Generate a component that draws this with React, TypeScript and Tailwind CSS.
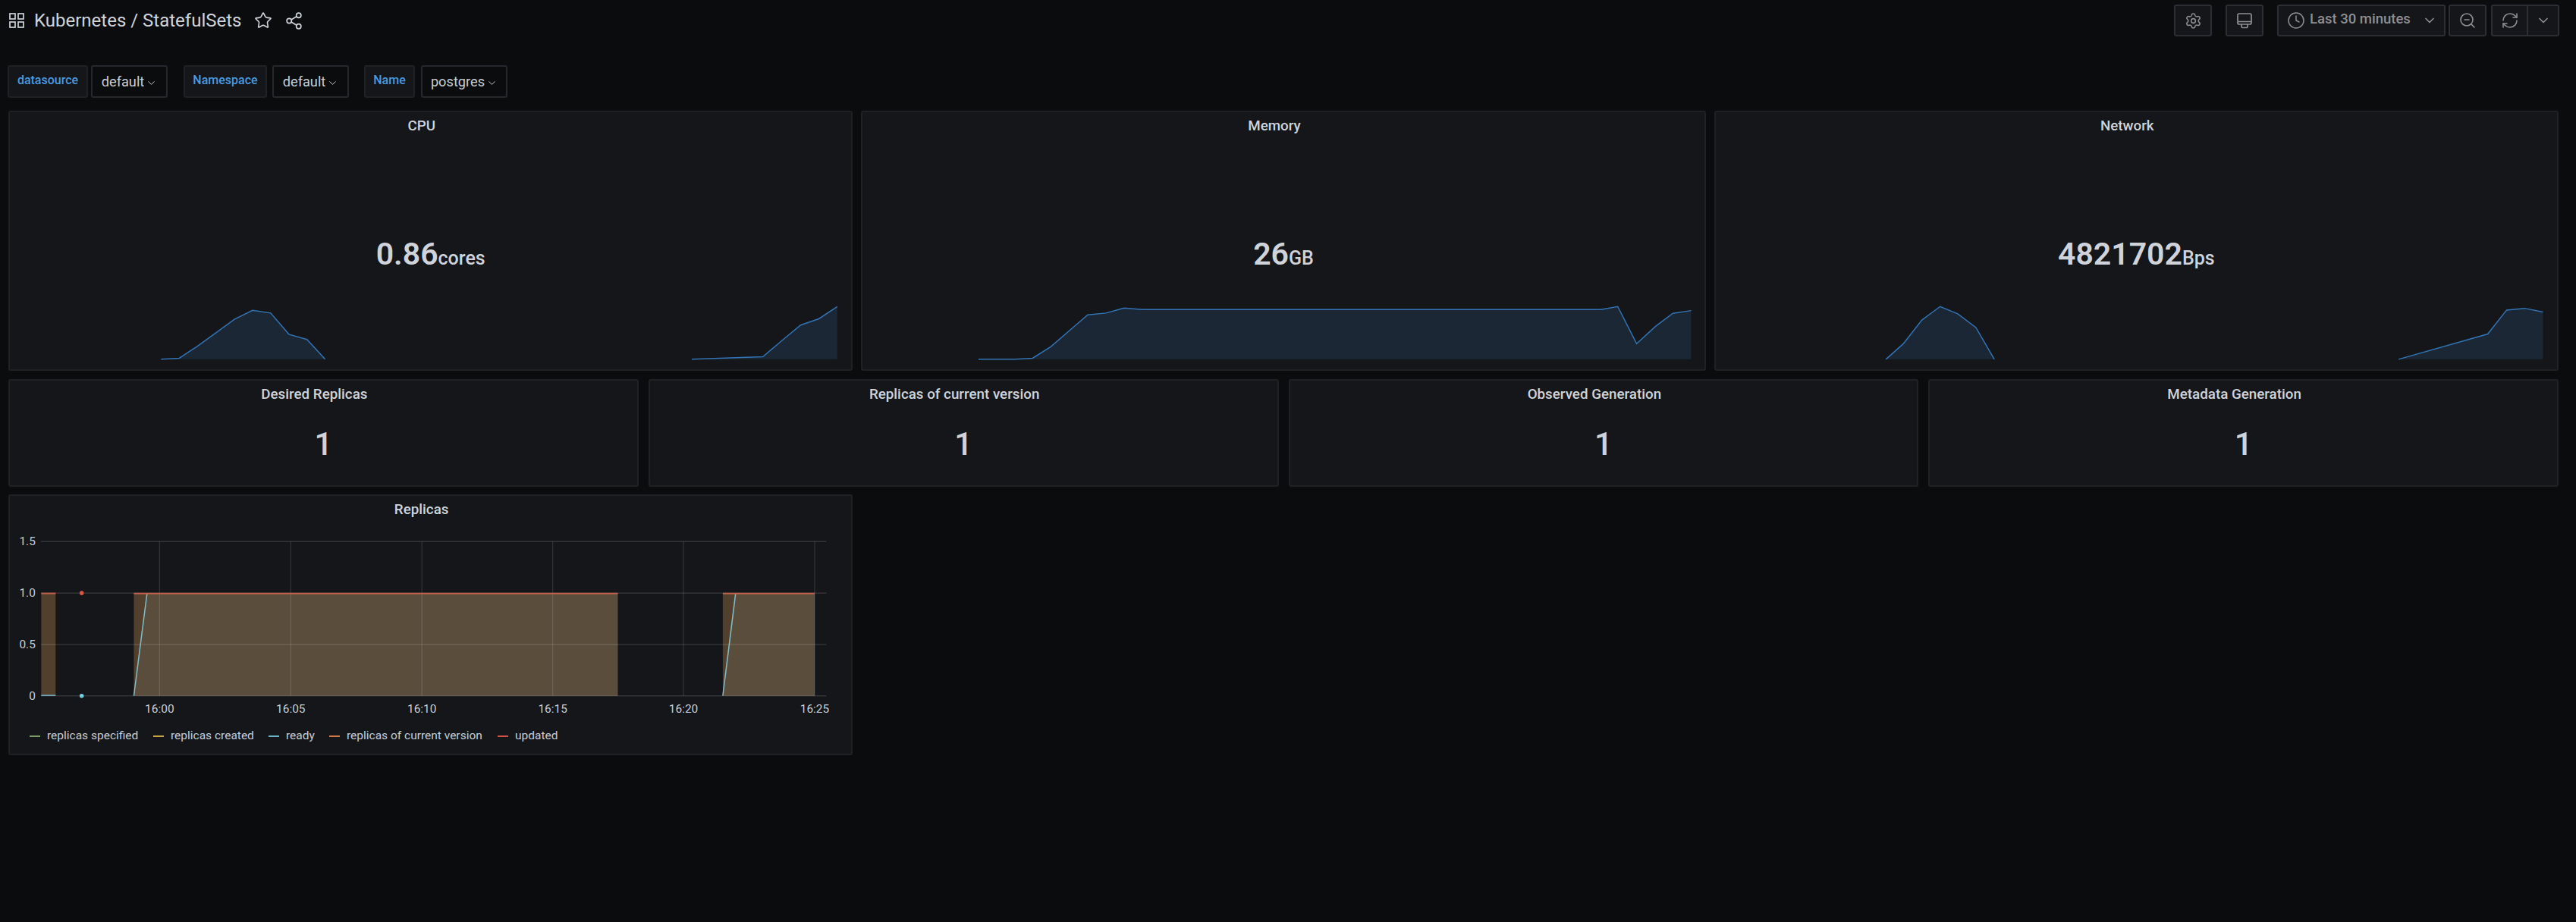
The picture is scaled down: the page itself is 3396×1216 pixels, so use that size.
import { ChevronDown, Clock, Settings, Share2, Star, ZoomOut, RefreshCw } from "lucide-react";

type Pt = [number, number];

const BASE = 329.7;

const sparks: Record<string, Pt[][]> = {
  CPU: [
    [[200, 329.7], [224, 328.3], [247, 313], [273, 294], [297, 276.3], [321, 264.3], [345, 268], [369, 296.3], [393, 303.3], [417, 329.7]],
    [[902, 329.7], [996, 326.3], [1022, 304], [1046, 284], [1070, 275.7], [1094.5, 259.3]],
  ],
  Memory: [
    [[153.5, 329.7], [202, 329.7], [225, 328.3], [249, 313], [273.5, 291.7], [298, 270.3], [322, 268], [346, 261.3], [370, 263.3], [977, 263.3], [999, 259.3], [1024, 309], [1049, 285.7], [1072, 268.3], [1096, 264.7]],
  ],
  Network: [
    [[225, 329.7], [248, 309], [272.6, 277.3], [296.7, 259.3], [320, 269], [344, 287.3], [368.4, 329.7]],
    [[903, 329.7], [1021, 296], [1046, 264], [1070, 261.7], [1094, 266.7]],
  ],
};

const line = (pts: Pt[]) => pts.map((p) => p.join(",")).join(" ");
const area = (pts: Pt[]) => `${pts[0][0]},${BASE} ${line(pts)} ${pts[pts.length - 1][0]},${BASE}`;

const Panel = ({ title, className, children }: { title: string; className?: string; children?: React.ReactNode }) => (
  <div className={`relative rounded-[3px] border-2 border-[#1f2125] bg-[#141619] ${className ?? ""}`}>
    <div className="flex h-[36px] items-center justify-center pr-[24px] text-[18.8px] font-medium text-[#d0d4da]">{title}</div>
    {children}
  </div>
);

const StatPanel = ({ title, value, unit }: { title: string; value: string; unit: string }) => (
  <Panel title={title} className="h-[343px]">
    <svg className="absolute left-0 top-0 h-full w-full" viewBox="0 0 1113 343" preserveAspectRatio="none">
      {sparks[title].map((pts, i) => (
        <g key={i}>
          <polygon points={area(pts)} fill="#1b2734" />
          <polyline points={line(pts)} fill="none" stroke="#3274b5" strokeWidth="1.5" />
        </g>
      ))}
    </svg>
    <div className="relative mt-[123px] flex items-baseline justify-center text-[#d0d4da]">
      <span className="text-[41px] leading-[56px] font-semibold">{value}</span>
      <span className="text-[25px] font-medium">{unit}</span>
    </div>
  </Panel>
);

const SinglePanel = ({ title }: { title: string }) => (
  <Panel title={title} className="h-[142px]">
    <div className="mt-[23px] text-center text-[42px] leading-[50px] font-medium text-[#d0d4da]">1</div>
  </Panel>
);

const VarSelect = ({ label, labelW, value, selectW, className }: { label: string; labelW: string; value: string; selectW: string; className?: string }) => (
  <div className={`flex h-[43px] ${className ?? ""}`}>
    <div className={`flex items-center justify-center rounded-[3px] border-2 border-[#1f2125] bg-[#141619] pb-[3px] text-[16px] font-medium text-[#4a9ae0] ${labelW}`}>
      {label}
    </div>
    <div className={`flex items-center justify-center gap-[2px] rounded-[3px] border-2 border-[#25282c] bg-[#0b0c0e] text-[18.2px] text-[#c7ced6] ${selectW}`}>
      {value}
      <ChevronDown size={15} strokeWidth={1.6} className="mt-[3px]" />
    </div>
  </div>
);

const ToolButton = ({ className, children }: { className?: string; children: React.ReactNode }) => (
  <div className={`flex h-[42px] items-center justify-center rounded-[3px] border-2 border-[#2c2e33] bg-[#141619] text-[#8e8e93] ${className ?? ""}`}>
    {children}
  </div>
);

const gridX = [209, 382.5, 556, 729, 902, 1075.5];
const timeLabels = ["16:00", "16:05", "16:10", "16:15", "16:20", "16:25"];
const gridY: [number, string][] = [[714, "1.5"], [782, "1.0"], [850, "0.5"], [918, "0"]];

const legend: [string, string, string][] = [
  ["#7c9a66", "replicas specified", "w-[163px]"],
  ["#c9a53f", "replicas created", "w-[152px]"],
  ["#68b5c6", "ready", "w-[80px]"],
  ["#d07a42", "replicas of current version", "w-[222px]"],
  ["#cf5244", "updated", "w-[80px]"],
];

const ReplicaChart = () => (
  <svg className="block h-[256px] w-full" viewBox="11 694 1113 256">
    <rect x="52.5" y="782" width="19" height="136" fill="#51402e" />
    <rect x="175" y="782" width="640" height="136" fill="#51402e" />
    <rect x="954" y="782" width="121.5" height="136" fill="#51402e" />
    <polygon points="175,918 192.5,782 815,782 815,918" fill="#5a4d3c" />
    <polygon points="954,918 971,782 1075.5,782 1075.5,918" fill="#5a4d3c" />
    {gridY.map(([y, label]) => (
      <g key={label}>
        <line x1="52" x2="1091" y1={y} y2={y} stroke="#fff" strokeOpacity="0.13" strokeWidth="1.5" />
        <text x="45" y={y + 5} textAnchor="end" fontSize="15.5" fill="#c7ced6">{label}</text>
      </g>
    ))}
    {gridX.map((x, i) => (
      <g key={x}>
        <line x1={x} x2={x} y1="714" y2="918" stroke="#fff" strokeOpacity="0.13" strokeWidth="1.2" />
        <text x={x} y="940.5" textAnchor="middle" fontSize="15.5" fill="#c7ced6">{timeLabels[i]}</text>
      </g>
    ))}
    <line x1="52.5" x2="71.5" y1="917.5" y2="917.5" stroke="#6fb5c8" strokeWidth="1.5" />
    <polyline points="175,918 192.5,782" fill="none" stroke="#84bcc6" strokeWidth="1.5" />
    <polyline points="954,918 971,782" fill="none" stroke="#84bcc6" strokeWidth="1.5" />
    <line x1="52.5" x2="71.5" y1="782.5" y2="782.5" stroke="#c5604a" strokeWidth="2" />
    <line x1="175" x2="815" y1="782.5" y2="782.5" stroke="#c5604a" strokeWidth="2" />
    <line x1="954" x2="1075.5" y1="782.5" y2="782.5" stroke="#c5604a" strokeWidth="2" />
    <circle cx="106" cy="782" r="2.8" fill="#d9553f" />
    <circle cx="106" cy="918" r="2.8" fill="#6ed0e0" />
  </svg>
);

export default function App() {
  return (
    <div className="min-h-[1216px] bg-[#0b0c0e] font-['Roboto',sans-serif] text-[#d0d4da]">
      {/* Top bar */}
      <div className="flex items-start justify-between pl-[12px] pr-[22px] pt-[6px]">
        <div className="flex h-[42px] items-center text-[#d0d4da]">
          <svg width="20" height="20" viewBox="0 0 20 20" fill="none" stroke="currentColor" strokeWidth="1.7">
            <rect x="1" y="1" width="7" height="7" />
            <rect x="12" y="1" width="7" height="7" />
            <rect x="1" y="12" width="7" height="7" />
            <rect x="12" y="12" width="7" height="7" />
          </svg>
          <span className="ml-[13px] text-[24px]">Kubernetes / StatefulSets</span>
          <Star size={24} strokeWidth={1.6} className="ml-[17px]" />
          <Share2 size={25} strokeWidth={1.6} className="ml-[16px]" />
        </div>
        <div className="flex">
          <ToolButton className="w-[50px]"><Settings size={23} strokeWidth={1.6} /></ToolButton>
          <ToolButton className="ml-[18px] w-[50px]">
            <svg width="20" height="21" viewBox="0 0 20 21" fill="none" stroke="currentColor" strokeWidth="1.7">
              <rect x="1" y="1" width="18" height="14" rx="2" />
              <path d="M1 11.5h18M6 15v3a1.5 1.5 0 0 0 1.5 1.5h5A1.5 1.5 0 0 0 14 18v-3" />
            </svg>
          </ToolButton>
          <ToolButton className="ml-[18px] w-[222px] justify-start pl-[11px]">
            <Clock size={24} strokeWidth={1.5} />
            <span className="ml-[6px] mb-[2px] text-[18.5px] font-medium">Last 30 minutes</span>
            <ChevronDown size={20} strokeWidth={2} className="ml-[15px]" />
          </ToolButton>
          <ToolButton className="ml-[4px] w-[50px]"><ZoomOut size={24} strokeWidth={1.6} /></ToolButton>
          <ToolButton className="ml-[6px] w-[90px]">
            <span className="flex h-full w-[47px] items-center justify-center border-r-2 border-[#2c2e33]">
              <RefreshCw size={24} strokeWidth={1.6} />
            </span>
            <span className="flex flex-1 items-center justify-center">
              <ChevronDown size={20} strokeWidth={2} />
            </span>
          </ToolButton>
        </div>
      </div>

      {/* Variables */}
      <div className="mt-[38px] flex pl-[10px]">
        <VarSelect label="datasource" labelW="w-[106px] mr-[4px]" value="default" selectW="w-[101px]" />
        <VarSelect label="Namespace" labelW="w-[110px] mr-[7px]" value="default" selectW="w-[101px]" className="ml-[21px]" />
        <VarSelect label="Name" labelW="w-[67px] mr-[8px]" value="postgres" selectW="w-[114px]" className="ml-[20px]" />
      </div>

      {/* Panels */}
      <div className="mt-[17px] pl-[11px] pr-[23px]">
        <div className="grid grid-cols-3 gap-[11px]">
          <StatPanel title="CPU" value="0.86" unit="cores" />
          <StatPanel title="Memory" value="26" unit="GB" />
          <StatPanel title="Network" value="4821702" unit="Bps" />
        </div>
        <div className="mt-[11px] grid grid-cols-4 gap-[13px]">
          <SinglePanel title="Desired Replicas" />
          <SinglePanel title="Replicas of current version" />
          <SinglePanel title="Observed Generation" />
          <SinglePanel title="Metadata Generation" />
        </div>
        <div className="mt-[10px] grid grid-cols-3 gap-[11px]">
          <Panel title="Replicas" className="h-[344px]">
            <div className="mt-[4px]">
              <ReplicaChart />
            </div>
            <div className="mt-[9px] flex pl-[26px] text-[15.5px] text-[#c7ced6]">
              {legend.map(([color, label, w]) => (
                <div key={label} className={`flex items-center ${w}`}>
                  <span className="mr-[9px] h-[2px] w-[14px]" style={{ backgroundColor: color }} />
                  {label}
                </div>
              ))}
            </div>
          </Panel>
        </div>
      </div>
    </div>
  );
}
